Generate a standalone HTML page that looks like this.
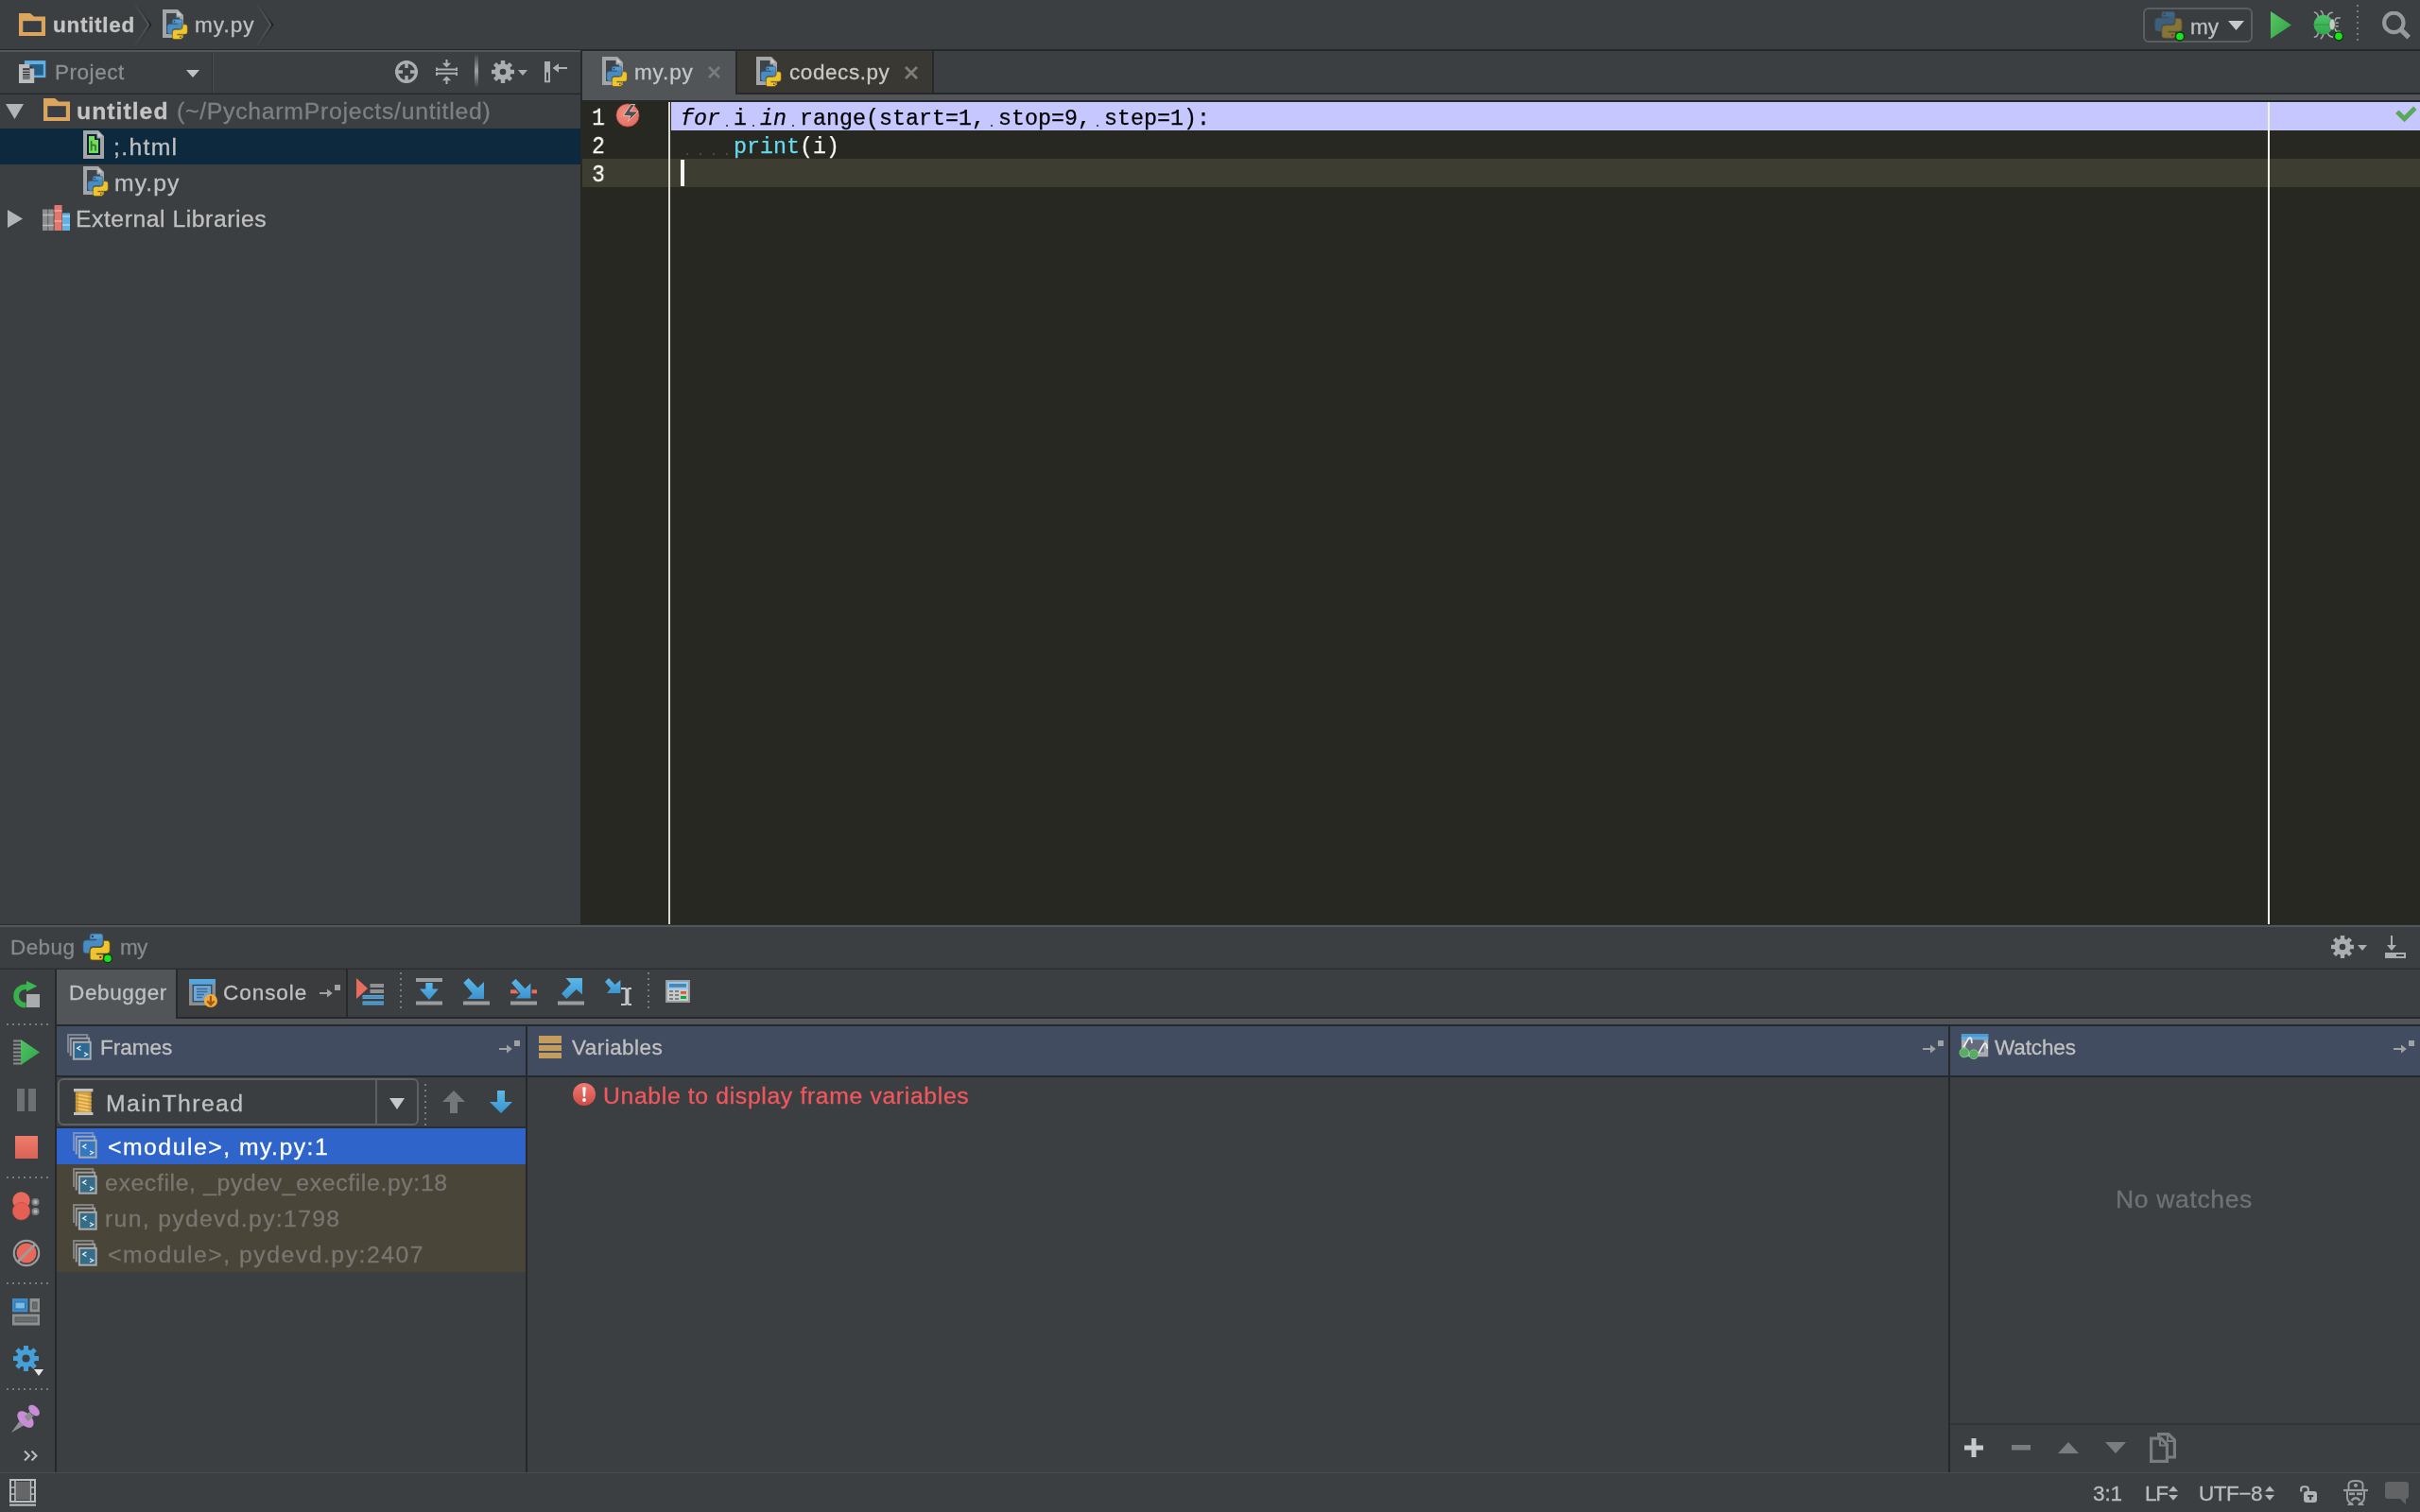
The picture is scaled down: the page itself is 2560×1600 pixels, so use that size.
<!DOCTYPE html>
<html><head><meta charset="utf-8"><title>untitled - my.py - PyCharm</title>
<style>
html,body{margin:0;padding:0;background:#3C3F41;}
#app{position:relative;width:2560px;height:1600px;overflow:hidden;background:#3C3F41;font-family:"Liberation Sans",sans-serif;}
#app>div,#app>span{position:absolute;}
#app svg{display:block;}
.t{white-space:pre;line-height:1;will-change:transform;-webkit-text-stroke:0.3px;}
.c{will-change:transform;-webkit-text-stroke:0.25px;white-space:pre;font-family:"Liberation Mono",monospace;font-size:23.333px;line-height:30px;height:30px;}
</style></head><body><div id="app">
<div style="left:0px;top:52px;width:2560px;height:1px;background:#26282B;"></div>
<div style="left:0px;top:53px;width:614px;height:2px;background:#525658;"></div>
<div style="left:614px;top:53px;width:1946px;height:1px;background:#26282B;"></div>
<div style="left:0px;top:98px;width:614px;height:1px;background:#34373A;"></div>
<div style="left:0px;top:99px;width:614px;height:1px;background:#232629;"></div>
<div style="left:224px;top:55px;width:1px;height:43px;background:#2F3234;"></div>
<div style="left:225px;top:55px;width:1px;height:43px;background:#4A4D4F;"></div>
<div style="left:614px;top:53px;width:2px;height:55px;background:#26282B;"></div>
<div style="left:0px;top:136px;width:614px;height:38px;background:#0D293E;"></div>
<div style="left:616px;top:54px;width:1944px;height:44px;background:#3C3F41;"></div>
<div style="left:616px;top:54px;width:162px;height:52px;background:#515557;"></div>
<div style="left:778px;top:54px;width:2px;height:44px;background:#26282B;"></div>
<div style="left:780px;top:54px;width:206px;height:44px;background:#393833;"></div>
<div style="left:986px;top:54px;width:2px;height:44px;background:#26282B;"></div>
<div style="left:778px;top:98px;width:1782px;height:2px;background:#26282B;"></div>
<div style="left:616px;top:100px;width:1944px;height:6px;background:#515557;"></div>
<div style="left:616px;top:106px;width:1944px;height:2px;background:#26282B;"></div>
<div style="left:614px;top:108px;width:1946px;height:870px;background:#272822;"></div>
<div style="left:616px;top:168px;width:1944px;height:30px;background:#3E3D32;"></div>
<div style="left:710px;top:108px;width:1850px;height:30px;background:#C7C7FF;"></div>
<div style="left:707px;top:108px;width:2px;height:870px;background:#D8D8D0;"></div>
<div style="left:2399px;top:108px;width:2px;height:870px;background:#F2F2EC;"></div>
<div style="left:720px;top:169px;width:4px;height:28px;background:#F8F8F0;"></div>
<div style="left:0px;top:978px;width:2560px;height:1px;background:#2A2C2E;"></div>
<div style="left:0px;top:979px;width:2560px;height:2px;background:#54575A;"></div>
<div style="left:0px;top:1024px;width:2560px;height:1px;background:#35383A;"></div>
<div style="left:0px;top:1025px;width:2560px;height:1px;background:#2A2C2E;"></div>
<div style="left:58px;top:1026px;width:2px;height:532px;background:#26282B;"></div>
<div style="left:60px;top:1026px;width:126px;height:58px;background:#515557;"></div>
<div style="left:186px;top:1026px;width:2px;height:50px;background:#26282B;"></div>
<div style="left:188px;top:1026px;width:178px;height:50px;background:#3A3C3E;"></div>
<div style="left:366px;top:1026px;width:2px;height:50px;background:#26282B;"></div>
<div style="left:186px;top:1076px;width:2374px;height:2px;background:#26282B;"></div>
<div style="left:60px;top:1078px;width:2500px;height:6px;background:#515557;"></div>
<div style="left:60px;top:1084px;width:2500px;height:2px;background:#26282B;"></div>
<div style="left:60px;top:1086px;width:2500px;height:52px;background:#424C60;"></div>
<div style="left:60px;top:1138px;width:2500px;height:2px;background:#26282B;"></div>
<div style="left:556px;top:1086px;width:2px;height:472px;background:#26282B;"></div>
<div style="left:2061px;top:1086px;width:2px;height:472px;background:#26282B;"></div>
<div style="left:60px;top:1192px;width:496px;height:2px;background:#2C2E30;"></div>
<div style="left:60px;top:1194px;width:496px;height:38px;background:#2F65CA;"></div>
<div style="left:60px;top:1232px;width:496px;height:114px;background:#494538;"></div>
<div style="left:61px;top:1141px;width:382px;height:50px;box-sizing:border-box;border:2px solid #5E6163;border-radius:6px;background:#3B3E40"></div>
<div style="left:397px;top:1143px;width:2px;height:46px;background:#5E6163;"></div>
<div style="left:2063px;top:1506px;width:497px;height:2px;background:#313436;"></div>
<div style="left:0px;top:1558px;width:2560px;height:1px;background:#4A4D4F;"></div>
<div style="left:2493px;top:5px;width:2px;height:40px;background:repeating-linear-gradient(to bottom,#787A7C 0 2px,transparent 2px 6px)"></div>
<div style="left:423px;top:1029px;width:2px;height:38px;background:repeating-linear-gradient(to bottom,#787A7C 0 2px,transparent 2px 6px)"></div>
<div style="left:685px;top:1029px;width:2px;height:38px;background:repeating-linear-gradient(to bottom,#787A7C 0 2px,transparent 2px 6px)"></div>
<div style="left:449px;top:1147px;width:2px;height:44px;background:repeating-linear-gradient(to bottom,#787A7C 0 2px,transparent 2px 6px)"></div>
<div style="left:7px;top:1083px;width:44px;height:2px;background:repeating-linear-gradient(to right,#787A7C 0 2px,transparent 2px 6px)"></div>
<div style="left:7px;top:1245px;width:44px;height:2px;background:repeating-linear-gradient(to right,#787A7C 0 2px,transparent 2px 6px)"></div>
<div style="left:7px;top:1357px;width:44px;height:2px;background:repeating-linear-gradient(to right,#787A7C 0 2px,transparent 2px 6px)"></div>
<div style="left:7px;top:1469px;width:44px;height:2px;background:repeating-linear-gradient(to right,#787A7C 0 2px,transparent 2px 6px)"></div>
<div style="left:20px;top:14px"><svg width="28" height="24" viewBox="0 0 28 24"><path d="M0 0H12L16 3.500H28V24H0Z" fill="#DCA55E"/><rect x="4.300" y="8.200" width="19.500" height="11.800" fill="#393E44"/></svg></div>
<div style="left:142.3px;top:2px"><svg width="20" height="50" viewBox="0 0 20 50"><defs><linearGradient id="chd" x1="0" y1="0" x2="0" y2="1"><stop offset="0" stop-color="#1B1D1E" stop-opacity="0"/><stop offset=".35" stop-color="#1B1D1E" stop-opacity=".25"/><stop offset=".5" stop-color="#1B1D1E" stop-opacity="1"/><stop offset=".65" stop-color="#1B1D1E" stop-opacity=".25"/><stop offset="1" stop-color="#1B1D1E" stop-opacity="0"/></linearGradient><linearGradient id="chl" x1="0" y1="0" x2="0" y2="1"><stop offset="0" stop-color="#565A5C" stop-opacity=".15"/><stop offset=".5" stop-color="#565A5C" stop-opacity="1"/><stop offset="1" stop-color="#565A5C" stop-opacity=".15"/></linearGradient></defs><path d="M2.300 2L17.100 24.200L2.800 46" fill="none" stroke="url(#chd)" stroke-width="2.400"/><path d="M.5 2L15.300 24.200L1 46" fill="none" stroke="url(#chl)" stroke-width="1.700"/></svg></div>
<div style="left:270.8px;top:2px"><svg width="20" height="50" viewBox="0 0 20 50"><defs><linearGradient id="chd" x1="0" y1="0" x2="0" y2="1"><stop offset="0" stop-color="#1B1D1E" stop-opacity="0"/><stop offset=".35" stop-color="#1B1D1E" stop-opacity=".25"/><stop offset=".5" stop-color="#1B1D1E" stop-opacity="1"/><stop offset=".65" stop-color="#1B1D1E" stop-opacity=".25"/><stop offset="1" stop-color="#1B1D1E" stop-opacity="0"/></linearGradient><linearGradient id="chl" x1="0" y1="0" x2="0" y2="1"><stop offset="0" stop-color="#565A5C" stop-opacity=".15"/><stop offset=".5" stop-color="#565A5C" stop-opacity="1"/><stop offset="1" stop-color="#565A5C" stop-opacity=".15"/></linearGradient></defs><path d="M2.300 2L17.100 24.200L2.800 46" fill="none" stroke="url(#chd)" stroke-width="2.400"/><path d="M.5 2L15.300 24.200L1 46" fill="none" stroke="url(#chl)" stroke-width="1.700"/></svg></div>
<div style="left:172px;top:10px"><svg width="28" height="33" viewBox="0 0 28 33"><path d="M0 0H16L22 6V30H0Z" fill="#A3A5A6"/><path d="M4 4H14.500V8.500H18V26H4Z" fill="#3F4448"/><path d="M15.500 1.500L20.500 6.500H15.500Z" fill="#C9CACB"/><g transform="translate(4.900 10.300) scale(.760)"><g opacity="1"><path d="M7 2.600Q7 0 9.600 0H18.400Q21 0 21 2.600V10Q21 13.400 17.500 13.500H10.200Q6.800 13.600 6.800 17V20.700H3Q0 20.700 0 17.500V10.200Q0 6.900 3.200 6.900H14V6.100H7Z" fill="#4A8CC2" stroke="#2E628F" stroke-width=".7"/><path d="M8 2.800Q8 1 9.800 1H18.200Q20 1 20 2.800V5H8Z" fill="#6FAAD6" opacity=".45"/><circle cx="9.900" cy="3" r="1.150" fill="#173F63"/><g transform="rotate(180 14.100 14)"><path d="M7 2.600Q7 0 9.600 0H18.400Q21 0 21 2.600V10Q21 13.400 17.500 13.500H10.200Q6.800 13.600 6.800 17V20.700H3Q0 20.700 0 17.500V10.200Q0 6.900 3.200 6.900H14V6.100H7Z" fill="#EEC42F" stroke="#5F4F0C" stroke-width=".8"/><circle cx="9.900" cy="3" r="1.150" fill="#5A3C06"/></g></g></g></svg></div>
<div style="left:20px;top:64px"><svg width="29" height="25" viewBox="0 0 29 25"><rect x="5.900" y=".1" width="22.400" height="18" fill="#62AFE3"/><rect x="8.400" y="4.100" width="17.400" height="11.600" fill="#235E86"/><path d="M0 4.100H11.200L16.200 8.700V24H0Z" fill="#B9BBBC"/><path d="M11.400 4.300V8.500H16Z" fill="#34373A"/><rect x="4.100" y="8.200" width="7.400" height="11.800" fill="#3A3D3F"/><path d="M4.100 10.900H11.500M4.100 13.500H11.500M4.100 16.200H11.500M4.100 18.800H11.500" stroke="#B9BBBC" stroke-width="1.100"/></svg></div>
<div style="left:197px;top:74px"><svg width="14" height="8" viewBox="0 0 14 8"><path d="M0 0H14L7.0 8Z" fill="#C0C2C3"/></svg></div>
<div style="left:418px;top:64px"><svg width="24" height="24" viewBox="0 0 24 24"><circle cx="12" cy="12" r="10.400" fill="none" stroke="#ABADAF" stroke-width="3.200"/><path d="M12 0V8M12 16V24M0 12H8M16 12H24" stroke="#ABADAF" stroke-width="3.400"/></svg></div>
<div style="left:461px;top:63px"><svg width="23" height="26" viewBox="0 0 23 26"><path d="M0 10.500H23M0 14.700H23" stroke="#ABADAF" stroke-width="1.900"/><path d="M1 8.500V12M22 8.500V12M1 13.500V17M22 13.500V17" stroke="#ABADAF" stroke-width="2"/><path d="M11.500 0V4.500" stroke="#ABADAF" stroke-width="2"/><path d="M6.800 3.800H16.200L11.500 8.600Z" fill="#ABADAF"/><path d="M11.500 26V21.500" stroke="#ABADAF" stroke-width="2"/><path d="M6.800 22.200H16.200L11.500 17.400Z" fill="#ABADAF"/></svg></div>
<div style="left:502px;top:57px;width:4px;height:36px;background:linear-gradient(to bottom,rgba(150,153,155,0),rgba(160,163,165,1) 50%,rgba(150,153,155,0));border-radius:2px"></div>
<div style="left:520px;top:64px"><svg width="24" height="24" viewBox="0 0 24 24"><rect x="9.80" y="0" width="4.400" height="24" fill="#ABADAF" transform="rotate(0.0 12 12)"/><rect x="9.80" y="0" width="4.400" height="24" fill="#ABADAF" transform="rotate(45.0 12 12)"/><rect x="9.80" y="0" width="4.400" height="24" fill="#ABADAF" transform="rotate(90.0 12 12)"/><rect x="9.80" y="0" width="4.400" height="24" fill="#ABADAF" transform="rotate(135.0 12 12)"/><circle cx="12" cy="12" r="8.64" fill="#ABADAF"/><circle cx="12" cy="12" r="3.300" fill="#3C3F41"/></svg></div>
<div style="left:548px;top:74px"><svg width="10" height="6" viewBox="0 0 10 6"><path d="M0 0H10L5.0 6Z" fill="#ABADAF"/></svg></div>
<div style="left:576px;top:65px"><svg width="25" height="23" viewBox="0 0 25 23"><rect x="0" y="0" width="6" height="22.300" fill="#ABADAF"/><rect x="2" y="11.500" width="2" height="8.800" fill="#3C3F41"/><path d="M13 7H24" stroke="#ABADAF" stroke-width="2"/><path d="M8.500 7L15 2.200V11.800Z" fill="#ABADAF"/></svg></div>
<div style="left:6px;top:110px"><svg width="19" height="16" viewBox="0 0 19 16"><path d="M0 0H19L9.500 16Z" fill="#B2B4B5"/></svg></div>
<div style="left:46px;top:104px"><svg width="28" height="24" viewBox="0 0 28 24"><path d="M0 0H12L16 3.500H28V24H0Z" fill="#DCA55E"/><rect x="4.300" y="8.200" width="19.500" height="11.800" fill="#393E44"/></svg></div>
<div style="left:88px;top:138px"><svg width="22" height="30" viewBox="0 0 22 30"><path d="M0 0H16L22 6V30H0Z" fill="#A3A5A6"/><path d="M4 4H14.500V8.500H18V26H4Z" fill="#0B2135"/><path d="M15.500 1.500L20.500 6.500H15.500Z" fill="#C9CACB"/><path d="M6 6H12V10H16V24H6Z" fill="#70DD5E"/><path d="M8.600 11V21.500M8.600 16.500Q11 14.500 13 16.200V21.500" fill="none" stroke="#3B7A2E" stroke-width="1.800"/></svg></div>
<div style="left:88px;top:176px"><svg width="28" height="33" viewBox="0 0 28 33"><path d="M0 0H16L22 6V30H0Z" fill="#A3A5A6"/><path d="M4 4H14.500V8.500H18V26H4Z" fill="#3F4448"/><path d="M15.500 1.500L20.500 6.500H15.500Z" fill="#C9CACB"/><g transform="translate(4.900 10.300) scale(.760)"><g opacity="1"><path d="M7 2.600Q7 0 9.600 0H18.400Q21 0 21 2.600V10Q21 13.400 17.500 13.500H10.200Q6.800 13.600 6.800 17V20.700H3Q0 20.700 0 17.500V10.200Q0 6.900 3.200 6.900H14V6.100H7Z" fill="#4A8CC2" stroke="#2E628F" stroke-width=".7"/><path d="M8 2.800Q8 1 9.800 1H18.200Q20 1 20 2.800V5H8Z" fill="#6FAAD6" opacity=".45"/><circle cx="9.900" cy="3" r="1.150" fill="#173F63"/><g transform="rotate(180 14.100 14)"><path d="M7 2.600Q7 0 9.600 0H18.400Q21 0 21 2.600V10Q21 13.400 17.500 13.500H10.200Q6.800 13.600 6.800 17V20.700H3Q0 20.700 0 17.500V10.200Q0 6.900 3.200 6.900H14V6.100H7Z" fill="#EEC42F" stroke="#5F4F0C" stroke-width=".8"/><circle cx="9.900" cy="3" r="1.150" fill="#5A3C06"/></g></g></g></svg></div>
<div style="left:8px;top:222px"><svg width="16" height="19" viewBox="0 0 16 19"><path d="M0 0V19L16 9.500Z" fill="#B2B4B5"/></svg></div>
<div style="left:45px;top:217px"><svg width="29" height="27" viewBox="0 0 29 27"><rect x="0" y="4.500" width="5.500" height="22.500" fill="#8C8E8F"/><rect x="6.200" y="4.500" width="5.500" height="22.500" fill="#8C8E8F"/><rect x="12.500" y="0" width="8" height="27" fill="#E4776D"/><rect x="21" y="8.500" width="8" height="18.500" fill="#62B2E1"/><path d="M0 10.500H11.700M0 21.500H11.700" stroke="#B9BABB" stroke-width="1.600"/><path d="M12.500 6H20.500M12.500 17H20.500" stroke="#F3A79F" stroke-width="1.600"/><path d="M21 12H29M21 21H29" stroke="#A5D6F2" stroke-width="1.600"/></svg></div>
<div style="left:637px;top:60px"><svg width="28" height="33" viewBox="0 0 28 33"><path d="M0 0H16L22 6V30H0Z" fill="#A3A5A6"/><path d="M4 4H14.500V8.500H18V26H4Z" fill="#3F4448"/><path d="M15.500 1.500L20.500 6.500H15.500Z" fill="#C9CACB"/><g transform="translate(4.900 10.300) scale(.760)"><g opacity="1"><path d="M7 2.600Q7 0 9.600 0H18.400Q21 0 21 2.600V10Q21 13.400 17.500 13.500H10.200Q6.800 13.600 6.800 17V20.700H3Q0 20.700 0 17.500V10.200Q0 6.900 3.200 6.900H14V6.100H7Z" fill="#4A8CC2" stroke="#2E628F" stroke-width=".7"/><path d="M8 2.800Q8 1 9.800 1H18.200Q20 1 20 2.800V5H8Z" fill="#6FAAD6" opacity=".45"/><circle cx="9.900" cy="3" r="1.150" fill="#173F63"/><g transform="rotate(180 14.100 14)"><path d="M7 2.600Q7 0 9.600 0H18.400Q21 0 21 2.600V10Q21 13.400 17.500 13.500H10.200Q6.800 13.600 6.800 17V20.700H3Q0 20.700 0 17.500V10.200Q0 6.900 3.200 6.900H14V6.100H7Z" fill="#EEC42F" stroke="#5F4F0C" stroke-width=".8"/><circle cx="9.900" cy="3" r="1.150" fill="#5A3C06"/></g></g></g></svg></div>
<div style="left:800px;top:60px"><svg width="28" height="33" viewBox="0 0 28 33"><path d="M0 0H16L22 6V30H0Z" fill="#A3A5A6"/><path d="M4 4H14.500V8.500H18V26H4Z" fill="#3F4448"/><path d="M15.500 1.500L20.500 6.500H15.500Z" fill="#C9CACB"/><g transform="translate(4.900 10.300) scale(.760)"><g opacity="1"><path d="M7 2.600Q7 0 9.600 0H18.400Q21 0 21 2.600V10Q21 13.400 17.500 13.500H10.200Q6.800 13.600 6.800 17V20.700H3Q0 20.700 0 17.500V10.200Q0 6.900 3.200 6.900H14V6.100H7Z" fill="#4A8CC2" stroke="#2E628F" stroke-width=".7"/><path d="M8 2.800Q8 1 9.800 1H18.200Q20 1 20 2.800V5H8Z" fill="#6FAAD6" opacity=".45"/><circle cx="9.900" cy="3" r="1.150" fill="#173F63"/><g transform="rotate(180 14.100 14)"><path d="M7 2.600Q7 0 9.600 0H18.400Q21 0 21 2.600V10Q21 13.400 17.500 13.500H10.200Q6.800 13.600 6.800 17V20.700H3Q0 20.700 0 17.500V10.200Q0 6.900 3.200 6.900H14V6.100H7Z" fill="#EEC42F" stroke="#5F4F0C" stroke-width=".8"/><circle cx="9.900" cy="3" r="1.150" fill="#5A3C06"/></g></g></g></svg></div>
<div style="left:749px;top:70px"><svg width="13" height="13" viewBox="0 0 13 13"><path d="M1 1L12 12M12 1L1 12" stroke="#787C7F" stroke-width="2.500"/></svg></div>
<div style="left:957px;top:70px"><svg width="14" height="14" viewBox="0 0 14 14"><path d="M1 1L13 13M13 1L1 13" stroke="#7F7F7A" stroke-width="2.800"/></svg></div>
<div style="left:651px;top:109px"><svg width="26" height="26" viewBox="0 0 26 26"><defs><radialGradient id="bpg" cx=".35" cy=".4" r=".75"><stop offset="0" stop-color="#F08C7C"/><stop offset="1" stop-color="#E06A60"/></radialGradient></defs><circle cx="13" cy="13" r="12.200" fill="url(#bpg)" stroke="#7A2E28" stroke-width=".6"/><path d="M16.300 1.500L20.700 1.500L15.400 8.800L24.100 9L13.400 19.200L15.800 13.800L8.400 13.400Z" fill="#4D5052" stroke="#F7CFC6" stroke-width=".8"/></svg></div>
<div style="left:2534px;top:112px"><svg width="23" height="18" viewBox="0 0 23 18"><path d="M1.800 6.300L9.500 13.800L20.800 2.300" fill="none" stroke="#5BA855" stroke-width="5"/></svg></div>
<div style="left:2267px;top:8px;width:116px;height:37px;box-sizing:border-box;border:2px solid #5B5E60;border-radius:6px;background:#3A3D3F"></div>
<div style="left:2279px;top:12px"><svg width="32" height="32" viewBox="0 0 32 32"><g transform="translate(.7 .2) scale(1.005 1)"><g opacity="0.82"><path d="M7 2.600Q7 0 9.600 0H18.400Q21 0 21 2.600V10Q21 13.400 17.500 13.500H10.200Q6.800 13.600 6.800 17V20.700H3Q0 20.700 0 17.500V10.200Q0 6.900 3.200 6.900H14V6.100H7Z" fill="#3F6789" stroke="#3A5A78" stroke-width=".7"/><path d="M8 2.800Q8 1 9.800 1H18.200Q20 1 20 2.800V5H8Z" fill="#4F7DA3" opacity=".45"/><circle cx="9.900" cy="3" r="1.150" fill="#2C4A66"/><g transform="rotate(180 14.100 14)"><path d="M7 2.600Q7 0 9.600 0H18.400Q21 0 21 2.600V10Q21 13.400 17.500 13.500H10.200Q6.800 13.600 6.800 17V20.700H3Q0 20.700 0 17.500V10.200Q0 6.900 3.200 6.900H14V6.100H7Z" fill="#96813A" stroke="#6A5A2A" stroke-width=".8"/><circle cx="9.900" cy="3" r="1.150" fill="#5A4C22"/></g></g></g><circle cx="27" cy="26.500" r="4.500" fill="#1BE31F" stroke="#0C3A0E" stroke-width="1.300"/></svg></div>
<div style="left:2357px;top:22px"><svg width="17" height="10" viewBox="0 0 17 10"><path d="M0 0H17L8.5 10Z" fill="#C8C9CA"/></svg></div>
<div style="left:2401.7px;top:11.6px"><svg width="22" height="29" viewBox="0 0 22 29"><defs><linearGradient id="rg" x1="0" y1="0" x2="1" y2="1"><stop offset="0" stop-color="#5CC766"/><stop offset="1" stop-color="#2E9E45"/></linearGradient></defs><path d="M0 0L22 14.500L0 29Z" fill="url(#rg)"/></svg></div>
<div style="left:2447px;top:10px"><svg width="33" height="34" viewBox="0 0 33 34"><g fill="none" stroke="#A6A8A9" stroke-width="1.600" stroke-linecap="round"><path d="M5.500 8.500Q5 3.600 1.500 3M10.800 6.500Q10.300 3.500 8.300 1.500M15.500 8Q15.500 3.800 20.300 3.200M5.500 23.800Q5 28.700 1.500 29.300M10.800 25.800Q10.300 28.800 8.300 30.800M15.500 24.300Q15.500 28.500 20.300 29.100M28.300 9H25.500Q23.500 9 23.300 11.800M28.300 23.300H25.500Q23.500 23.300 23.300 20.500M24 14.300H26.200M24 17.800H26.200"/></g><defs><linearGradient id="bgg" x1="0" y1="0" x2="0" y2="1"><stop offset="0" stop-color="#4FC36A"/><stop offset="1" stop-color="#2FA84C"/></linearGradient></defs><ellipse cx="10.800" cy="16.150" rx="10.200" ry="10.350" fill="url(#bgg)"/><path d="M.8 16.150H18" stroke="#2A9443" stroke-width="1"/><ellipse cx="20.100" cy="15.900" rx="3.100" ry="5.900" fill="#C4C6C7" stroke="#2A8A40" stroke-width=".6"/><circle cx="27" cy="28.300" r="4.500" fill="#1BE31F" stroke="#0C3A0E" stroke-width="1.300"/></svg></div>
<div style="left:2519px;top:12px"><svg width="31" height="30" viewBox="0 0 31 30"><circle cx="13.300" cy="11.900" r="10.200" fill="none" stroke="#97999B" stroke-width="4.200"/><path d="M20.500 19.200L29.200 27.600" stroke="#97999B" stroke-width="5.200"/></svg></div>
<div style="left:87px;top:987px"><svg width="32" height="33" viewBox="0 0 32 33"><g transform="translate(1 1)"><g opacity="1"><path d="M7 2.600Q7 0 9.600 0H18.400Q21 0 21 2.600V10Q21 13.400 17.500 13.500H10.200Q6.800 13.600 6.800 17V20.700H3Q0 20.700 0 17.500V10.200Q0 6.900 3.200 6.900H14V6.100H7Z" fill="#4A8CC2" stroke="#2E628F" stroke-width=".7"/><path d="M8 2.800Q8 1 9.800 1H18.200Q20 1 20 2.800V5H8Z" fill="#6FAAD6" opacity=".45"/><circle cx="9.900" cy="3" r="1.150" fill="#173F63"/><g transform="rotate(180 14.100 14)"><path d="M7 2.600Q7 0 9.600 0H18.400Q21 0 21 2.600V10Q21 13.400 17.500 13.500H10.200Q6.800 13.600 6.800 17V20.700H3Q0 20.700 0 17.500V10.200Q0 6.900 3.200 6.900H14V6.100H7Z" fill="#EEC42F" stroke="#5F4F0C" stroke-width=".8"/><circle cx="9.900" cy="3" r="1.150" fill="#5A3C06"/></g></g></g><circle cx="27" cy="27.300" r="4.400" fill="#1BE31F" stroke="#0E3A10" stroke-width="1.200"/></svg></div>
<div style="left:2466px;top:990px"><svg width="24" height="24" viewBox="0 0 24 24"><rect x="9.80" y="0" width="4.400" height="24" fill="#ABADAF" transform="rotate(0.0 12 12)"/><rect x="9.80" y="0" width="4.400" height="24" fill="#ABADAF" transform="rotate(45.0 12 12)"/><rect x="9.80" y="0" width="4.400" height="24" fill="#ABADAF" transform="rotate(90.0 12 12)"/><rect x="9.80" y="0" width="4.400" height="24" fill="#ABADAF" transform="rotate(135.0 12 12)"/><circle cx="12" cy="12" r="8.64" fill="#ABADAF"/><circle cx="12" cy="12" r="3.300" fill="#3C3F41"/></svg></div>
<div style="left:2494px;top:1000px"><svg width="10" height="6" viewBox="0 0 10 6"><path d="M0 0H10L5.0 6Z" fill="#ABADAF"/></svg></div>
<div style="left:2523px;top:990px"><svg width="22" height="24" viewBox="0 0 22 24"><rect x="0" y="18" width="22" height="6" fill="#ABADAF"/><rect x="12" y="20" width="8" height="2" fill="#3C3F41"/><path d="M7 0V11" stroke="#ABADAF" stroke-width="2"/><path d="M2 10H12L7 16Z" fill="#ABADAF"/></svg></div>
<div style="left:13px;top:1037px"><svg width="30" height="30" viewBox="0 0 30 30"><path d="M15 4.600A12.400 12.400 0 1 0 14.500 29.300V23.800A6.900 6.900 0 1 1 15 10.100Z" fill="#36B14C"/><path d="M15 1V12.300L26.300 6.600Z" fill="#3CB852"/><rect x="15" y="15" width="14" height="14" fill="#A9ABAC"/></svg></div>
<div style="left:14px;top:1100px"><svg width="28" height="27" viewBox="0 0 28 27"><path d="M0 1.500H8M0 5.500H8M0 9.500H8M0 13.500H8M0 17.500H8M0 21.500H8M0 25.500H8" stroke="#8A8C8D" stroke-width="2"/><defs><linearGradient id="rsg" x1="0" y1="0" x2="1" y2="1"><stop offset="0" stop-color="#52C465"/><stop offset="1" stop-color="#2FA247"/></linearGradient></defs><path d="M8 0L28 13.500L8 27Z" fill="url(#rsg)"/></svg></div>
<div style="left:18px;top:1152px"><svg width="20" height="24" viewBox="0 0 20 24"><rect x="0" y="0" width="8" height="24" fill="#6E7071"/><rect x="12" y="0" width="8" height="24" fill="#6E7071"/></svg></div>
<div style="left:16px;top:1202px"><svg width="24" height="24" viewBox="0 0 24 24"><defs><linearGradient id="sg" x1="0" y1="0" x2="0" y2="1"><stop offset="0" stop-color="#EE7D6B"/><stop offset="1" stop-color="#DA6257"/></linearGradient></defs><rect width="24" height="24" fill="url(#sg)"/></svg></div>
<div style="left:13px;top:1261px"><svg width="30" height="31" viewBox="0 0 30 31"><circle cx="9.500" cy="9.500" r="9.200" fill="#E96A5C"/><circle cx="9.500" cy="20.700" r="9.200" fill="#E55F54" stroke="#C44E45" stroke-width=".8"/><circle cx="24.500" cy="11" r="4" fill="#7E8081"/><circle cx="24.500" cy="11" r="2" fill="#B0B2B3"/><circle cx="24.500" cy="21" r="4" fill="#7E8081"/><circle cx="24.500" cy="21" r="2" fill="#B0B2B3"/></svg></div>
<div style="left:13px;top:1311px"><svg width="30" height="30" viewBox="0 0 30 30"><circle cx="15" cy="15" r="10.500" fill="#E8695C"/><circle cx="15" cy="15" r="13.200" fill="none" stroke="#9A9C9D" stroke-width="2.200"/><path d="M5.500 24.500L24.500 5.500" stroke="#9A9C9D" stroke-width="3"/></svg></div>
<div style="left:13px;top:1374px"><svg width="29" height="29" viewBox="0 0 29 29"><rect x="0" y="0" width="16.500" height="14.500" fill="#3A8CCB"/><rect x="3" y="4" width="10.500" height="7" fill="#7CBBE4" stroke="#2C6FA5" stroke-width="1"/><rect x="18.500" y="0" width="10.500" height="14.500" fill="#8E9091"/><rect x="21.500" y="4" width="4.500" height="7" fill="#6A6C6D" stroke="#5A5C5D" stroke-width="1"/><rect x="0" y="16.500" width="29" height="12" fill="#8E9091"/><rect x="3" y="20" width="23" height="5" fill="#6A6C6D" stroke="#5A5C5D" stroke-width="1"/></svg></div>
<div style="left:14px;top:1424px"><svg width="27" height="27" viewBox="0 0 27 27"><g transform="scale(1.125)"><rect x="9.80" y="0" width="4.400" height="24" fill="#46A0D8" transform="rotate(0.0 12 12)"/><rect x="9.80" y="0" width="4.400" height="24" fill="#46A0D8" transform="rotate(45.0 12 12)"/><rect x="9.80" y="0" width="4.400" height="24" fill="#46A0D8" transform="rotate(90.0 12 12)"/><rect x="9.80" y="0" width="4.400" height="24" fill="#46A0D8" transform="rotate(135.0 12 12)"/><circle cx="12" cy="12" r="8.64" fill="#46A0D8"/><circle cx="12" cy="12" r="3.600" fill="#3C3F41"/></g></svg><div style="position:absolute;left:22px;top:25px"><svg width="10" height="7" viewBox="0 0 10 7"><path d="M0 0H10L5.0 7Z" fill="#E8E8E8"/></svg></div></div>
<div style="left:12px;top:1485px"><svg width="32" height="32" viewBox="0 0 32 32"><path d="M0 31L8.500 19L13 23.500Z" fill="#8F9192"/><ellipse cx="15" cy="17" rx="10.500" ry="6.300" fill="#C98DD8" transform="rotate(45 15 17)"/><path d="M13.500 14.500L19 9L23.500 13.500L18 19Z" fill="#8A8C8D"/><ellipse cx="24" cy="7.500" rx="7" ry="4.300" fill="#C98DD8" transform="rotate(45 24 7.500)"/></svg></div>
<div style="left:25px;top:1535px"><svg width="15" height="11" viewBox="0 0 15 11"><path d="M1 .5L6 5.500L1 10.500M8.500 .5L13.500 5.500L8.500 10.500" fill="none" stroke="#BDBFC0" stroke-width="2"/></svg></div>
<div style="left:10px;top:1565px"><svg width="28" height="29" viewBox="0 0 28 29"><rect x="1" y="1" width="26" height="23" fill="none" stroke="#B9BBBC" stroke-width="2"/><rect x="7" y="3" width="14.500" height="19" fill="#646667"/><path d="M6 1V24M22.500 1V24M1 9H6M1 16H6M22.500 9H27M22.500 16H27" stroke="#B9BBBC" stroke-width="1.600"/><rect x="0" y="26.500" width="28" height="2.200" fill="#B9BBBC"/></svg></div>
<div style="left:200px;top:1036px"><svg width="31" height="31" viewBox="0 0 31 31"><rect x="0" y="0" width="28" height="28" fill="#8C8E8F"/><rect x="0" y="0" width="28" height="5.500" fill="#55A6DE"/><rect x="4.200" y="6.500" width="19.600" height="17.300" fill="#6FA6D6" stroke="#21405E" stroke-width="1.200"/><path d="M8 10.500H19.500M8 13.500H19.500M8 16.500H16M8 19.500H14" stroke="#3A6C9A" stroke-width="1.300"/><circle cx="22.900" cy="23" r="7.100" fill="#F4AB35"/><path d="M22.900 18V27M19.200 23.200L22.900 27.300L26.600 23.200" fill="none" stroke="#9A5A14" stroke-width="2.200"/></svg></div>
<div style="left:338px;top:1042px"><svg width="23" height="15" viewBox="0 0 23 15"><path d="M0 9H9" stroke="#9FA1A2" stroke-width="2"/><path d="M8 4.500L13.800 9L8 13.500Z" fill="#9FA1A2"/><rect x="16" y="0" width="6" height="6" fill="#9FA1A2"/></svg></div>
<div style="left:377px;top:1035px"><svg width="29" height="29" viewBox="0 0 29 29"><path d="M0 0L12 11L0 22Z" fill="#E96C5E"/><rect x="14.500" y="6" width="14.500" height="4" fill="#8F9192"/><rect x="14.500" y="12" width="14.500" height="4" fill="#8F9192"/><rect x="6.500" y="18" width="22.500" height="4" fill="#5AA5D8"/><rect x="6.500" y="24.500" width="22.500" height="4" fill="#5AA5D8"/><path d="M6.500 20H29M6.500 26.500H29" stroke="#3F7FAE" stroke-width="1"/></svg></div>
<div style="left:440px;top:1035px"><svg width="28" height="29" viewBox="0 0 28 29"><defs><linearGradient id="bl" x1="0" y1="0" x2="0" y2="1"><stop offset="0" stop-color="#5DB8E8"/><stop offset="1" stop-color="#3A93CF"/></linearGradient></defs><rect x="0" y="0" width="28" height="4" fill="#9A9C9D"/><rect x="0" y="24.500" width="28" height="4" fill="#9A9C9D"/><path d="M10.300 5H17.600V11.500H23.800L14 23L4 11.500H10.300Z" fill="url(#bl)"/></svg></div>
<div style="left:490px;top:1035px"><svg width="28" height="29" viewBox="0 0 28 29"><defs><linearGradient id="bl" x1="0" y1="0" x2="0" y2="1"><stop offset="0" stop-color="#5DB8E8"/><stop offset="1" stop-color="#3A93CF"/></linearGradient></defs><path d="M0.200 5L5.600 0L15.500 10.300L22 4V22H4L9.800 16.400Z" fill="url(#bl)"/><rect x="0" y="24.500" width="28" height="4" fill="#9A9C9D"/></svg></div>
<div style="left:540px;top:1035px"><svg width="28" height="29" viewBox="0 0 28 29"><defs><linearGradient id="bl" x1="0" y1="0" x2="0" y2="1"><stop offset="0" stop-color="#5DB8E8"/><stop offset="1" stop-color="#3A93CF"/></linearGradient></defs><rect x="0" y="12.300" width="28" height="4" fill="#E96C5E"/><path stroke="#3C3F41" stroke-width="1.200" d="M0.200 5L5.600 0L15.500 10.300L22 4V22H4L9.800 16.400Z" fill="url(#bl)"/><rect x="0" y="24.500" width="28" height="4" fill="#9A9C9D"/></svg></div>
<div style="left:590px;top:1035px"><svg width="28" height="29" viewBox="0 0 28 29"><defs><linearGradient id="bl" x1="0" y1="0" x2="0" y2="1"><stop offset="0" stop-color="#5DB8E8"/><stop offset="1" stop-color="#3A93CF"/></linearGradient></defs><path d="M8.500 0H26V17.500L19.700 12L9.300 22L4 16.500L13.900 6.100Z" fill="url(#bl)"/><rect x="0" y="24.500" width="28" height="4" fill="#9A9C9D"/></svg></div>
<div style="left:640px;top:1035px"><svg width="29" height="29" viewBox="0 0 29 29"><defs><linearGradient id="bl" x1="0" y1="0" x2="0" y2="1"><stop offset="0" stop-color="#5DB8E8"/><stop offset="1" stop-color="#3A93CF"/></linearGradient></defs><path d="M0 4L4 0L10.600 7L16.400 2V16H2L6 11Z" fill="url(#bl)"/><path d="M17 11H21.500Q22.600 11 22.600 12.500V26.500Q22.600 28 21.500 28H17M28 11H25.200Q24.200 11 24.200 12.500V26.500Q24.200 28 25.200 28H28" fill="none" stroke="#C4C6C7" stroke-width="2"/><rect x="21.600" y="12" width="3.600" height="15" fill="#C4C6C7"/></svg></div>
<div style="left:704px;top:1037px"><svg width="26" height="24" viewBox="0 0 26 24"><rect x="0" y="0" width="26" height="24" fill="#9A9C9D"/><rect x="2" y="2" width="22" height="20" fill="#C8CACB"/><rect x="2" y="2" width="22" height="7.800" fill="#8DCBF2"/><rect x="4" y="4" width="18" height="3.800" fill="#4A86B4"/><g fill="#7D7F80"><rect x="4" y="11" width="4" height="2"/><rect x="10" y="11" width="4" height="2"/><rect x="4" y="15" width="4" height="2"/><rect x="10" y="15" width="4" height="2"/><rect x="4" y="19" width="4" height="2"/><rect x="10" y="19" width="4" height="2"/></g><rect x="16" y="12" width="6" height="2.800" fill="#E2573F"/><rect x="16" y="17" width="6" height="3" fill="#05B02C"/></svg></div>
<div style="left:71px;top:1094px"><svg width="27" height="28" viewBox="0 0 27 28"><path d="M21.300 1H1V20M21.300 0V4.800" fill="none" stroke="rgba(175,180,186,0.55)" stroke-width="2"/><path d="M24.200 4.800H3.700V23.500M23.200 4V8.800" fill="none" stroke="rgba(180,185,190,0.75)" stroke-width="2"/><rect x="6.900" y="8.800" width="17.800" height="17.900" fill="#2C6A94" stroke="#A9ADB0" stroke-width="2"/><path d="M14.400 12.900L10.700 15.200L14.400 17.500M18 19.700L21.600 21.800L18 23.800" fill="none" stroke="#E6EDF2" stroke-width="1.300"/></svg></div>
<div style="left:528px;top:1101px"><svg width="23" height="15" viewBox="0 0 23 15"><path d="M0 9H9" stroke="#9FA1A2" stroke-width="2"/><path d="M8 4.500L13.800 9L8 13.500Z" fill="#9FA1A2"/><rect x="16" y="0" width="6" height="6" fill="#9FA1A2"/></svg></div>
<div style="left:570px;top:1096px"><svg width="24" height="24" viewBox="0 0 24 24"><rect y="0" width="24" height="8" fill="#C49C5E"/><rect y="10" width="24" height="6" fill="#C49C5E"/><rect y="18" width="24" height="6" fill="#C49C5E"/></svg></div>
<div style="left:2034px;top:1101px"><svg width="23" height="15" viewBox="0 0 23 15"><path d="M0 9H9" stroke="#9FA1A2" stroke-width="2"/><path d="M8 4.500L13.800 9L8 13.500Z" fill="#9FA1A2"/><rect x="16" y="0" width="6" height="6" fill="#9FA1A2"/></svg></div>
<div style="left:2072px;top:1093px"><svg width="32" height="29" viewBox="0 0 32 29"><rect x="2.900" y="1" width="28.300" height="24.200" fill="#A9ABB0"/><rect x="2.900" y="1" width="28.300" height="6.300" fill="#4C9AD4"/><rect x="2.900" y="4" width="28.300" height="3.300" fill="#64ABDB"/><rect x="7.500" y="7.300" width="19.200" height="13" fill="#666B7C"/><path d="M5.400 14.500L10.400 6.100Q12.300 3.600 13.500 7L13.900 10.300M21.400 20.900L26.400 12.200Q28.400 9.700 29.600 13L30.100 16.200" fill="none" stroke="#ECECF0" stroke-width="1.800" stroke-linecap="round"/><circle cx="5.900" cy="20.900" r="4.900" fill="#55AC62" stroke="#84D68E" stroke-width=".9" opacity=".95"/><circle cx="15.900" cy="22.700" r="4.900" fill="#55AC62" stroke="#84D68E" stroke-width=".9" opacity=".95"/></svg></div>
<div style="left:2532px;top:1101px"><svg width="23" height="15" viewBox="0 0 23 15"><path d="M0 9H9" stroke="#9FA1A2" stroke-width="2"/><path d="M8 4.500L13.800 9L8 13.500Z" fill="#9FA1A2"/><rect x="16" y="0" width="6" height="6" fill="#9FA1A2"/></svg></div>
<div style="left:78px;top:1152px"><svg width="21" height="28" viewBox="0 0 21 28"><rect x="0" y="0" width="20.400" height="3.300" fill="#BFC1C2"/><rect x="0" y="25" width="20.400" height="3" fill="#BFC1C2"/><rect x="1.900" y="3.300" width="16.600" height="21.700" fill="#D9A240"/><path d="M1.900 6L18.500 9M1.900 9.700L18.500 12.700M1.900 13.400L18.500 16.400M1.900 17.100L18.500 20.100M1.900 20.800L18.500 23.800" stroke="#F2CD74" stroke-width="1.500"/><rect x="1.900" y="3.300" width="3" height="21.700" fill="#B58024" opacity=".55"/><rect x="15.500" y="3.300" width="3" height="21.700" fill="#B58024" opacity=".35"/></svg></div>
<div style="left:412px;top:1162px"><svg width="16" height="12" viewBox="0 0 16 12"><path d="M0 0H16L8.0 12Z" fill="#C8C9CA"/></svg></div>
<div style="left:468px;top:1154px"><svg width="24" height="24" viewBox="0 0 24 24"><path d="M12 0L24 12H16V24H8V12H0Z" fill="#747677"/></svg></div>
<div style="left:517.8px;top:1154px"><svg width="24" height="24" viewBox="0 0 24 24"><defs><linearGradient id="bl" x1="0" y1="0" x2="0" y2="1"><stop offset="0" stop-color="#5DB8E8"/><stop offset="1" stop-color="#3A93CF"/></linearGradient></defs><path d="M12 24L24 12H16V0H8V12H0Z" fill="url(#bl)"/></svg></div>
<div style="left:77px;top:1198px"><svg width="27" height="28" viewBox="0 0 27 28"><path d="M21.300 1H1V20M21.300 0V4.800" fill="none" stroke="rgba(175,180,186,0.55)" stroke-width="2"/><path d="M24.200 4.800H3.700V23.500M23.200 4V8.800" fill="none" stroke="rgba(180,185,190,0.75)" stroke-width="2"/><rect x="6.900" y="8.800" width="17.800" height="17.900" fill="#3378C0" stroke="#A9ADB0" stroke-width="2"/><path d="M14.400 12.900L10.700 15.200L14.400 17.500M18 19.700L21.600 21.800L18 23.800" fill="none" stroke="#E6EDF2" stroke-width="1.300"/></svg></div>
<div style="left:77px;top:1236px"><svg width="27" height="28" viewBox="0 0 27 28"><path d="M21.300 1H1V20M21.300 0V4.800" fill="none" stroke="rgba(175,180,186,0.55)" stroke-width="2"/><path d="M24.200 4.800H3.700V23.500M23.200 4V8.800" fill="none" stroke="rgba(180,185,190,0.75)" stroke-width="2"/><rect x="6.900" y="8.800" width="17.800" height="17.900" fill="#356D88" stroke="#A9ADB0" stroke-width="2"/><path d="M14.400 12.900L10.700 15.200L14.400 17.500M18 19.700L21.600 21.800L18 23.800" fill="none" stroke="#E6EDF2" stroke-width="1.300"/></svg></div>
<div style="left:77px;top:1274px"><svg width="27" height="28" viewBox="0 0 27 28"><path d="M21.300 1H1V20M21.300 0V4.800" fill="none" stroke="rgba(175,180,186,0.55)" stroke-width="2"/><path d="M24.200 4.800H3.700V23.500M23.200 4V8.800" fill="none" stroke="rgba(180,185,190,0.75)" stroke-width="2"/><rect x="6.900" y="8.800" width="17.800" height="17.900" fill="#356D88" stroke="#A9ADB0" stroke-width="2"/><path d="M14.400 12.900L10.700 15.200L14.400 17.500M18 19.700L21.600 21.800L18 23.800" fill="none" stroke="#E6EDF2" stroke-width="1.300"/></svg></div>
<div style="left:77px;top:1312px"><svg width="27" height="28" viewBox="0 0 27 28"><path d="M21.300 1H1V20M21.300 0V4.800" fill="none" stroke="rgba(175,180,186,0.55)" stroke-width="2"/><path d="M24.200 4.800H3.700V23.500M23.200 4V8.800" fill="none" stroke="rgba(180,185,190,0.75)" stroke-width="2"/><rect x="6.900" y="8.800" width="17.800" height="17.900" fill="#356D88" stroke="#A9ADB0" stroke-width="2"/><path d="M14.400 12.900L10.700 15.200L14.400 17.500M18 19.700L21.600 21.800L18 23.800" fill="none" stroke="#E6EDF2" stroke-width="1.300"/></svg></div>
<div style="left:606px;top:1146px"><svg width="24" height="24" viewBox="0 0 24 24"><defs><linearGradient id="eg" x1="0" y1="0" x2="0" y2="1"><stop offset="0" stop-color="#F07A72"/><stop offset="1" stop-color="#CF4B46"/></linearGradient></defs><circle cx="12" cy="12" r="12" fill="url(#eg)"/><path d="M10.300 4.500H13.700L13.100 14.500H10.900Z" fill="#FFF"/><circle cx="12" cy="18" r="1.900" fill="#FFF"/></svg></div>
<div style="left:2078px;top:1522px"><svg width="20" height="20" viewBox="0 0 20 20"><path d="M10 0V20M0 10H20" stroke="#C8CACB" stroke-width="5"/></svg></div>
<div style="left:2128px;top:1529px"><svg width="20" height="6" viewBox="0 0 20 6"><rect width="20" height="5.500" fill="#7A7C7E"/></svg></div>
<div style="left:2177px;top:1526px"><svg width="22" height="12" viewBox="0 0 22 12"><path d="M0 12H22L11.0 0Z" fill="#7A7C7E"/></svg></div>
<div style="left:2227px;top:1526px"><svg width="22" height="12" viewBox="0 0 22 12"><path d="M0 0H22L11.0 12Z" fill="#7A7C7E"/></svg></div>
<div style="left:2274px;top:1516px"><svg width="28" height="32" viewBox="0 0 28 32"><path d="M9.600 6V1.600H20L26.400 8V26H20" fill="none" stroke="#7A7C7E" stroke-width="3.200"/><path d="M19 2V9H26" fill="none" stroke="#7A7C7E" stroke-width="2.200"/><path d="M1.600 6.100H12L18.400 12.500V30.400H1.600Z" fill="none" stroke="#7A7C7E" stroke-width="3.200"/><path d="M11 6.500V13.500H18" fill="none" stroke="#7A7C7E" stroke-width="2.200"/></svg></div>
<div style="left:2294px;top:1572px"><svg width="10" height="16" viewBox="0 0 10 16"><path d="M0 6.200H10L5 .5Z" fill="#B4B6B7"/><path d="M0 10H10L5 15.800Z" fill="#B4B6B7"/></svg></div>
<div style="left:2395.5px;top:1572px"><svg width="10" height="16" viewBox="0 0 10 16"><path d="M0 6.200H10L5 .5Z" fill="#B4B6B7"/><path d="M0 10H10L5 15.800Z" fill="#B4B6B7"/></svg></div>
<div style="left:2432px;top:1571px"><svg width="19" height="19" viewBox="0 0 19 19"><path d="M2.200 7.500V4.800Q2.200 2.200 4.800 2.200H7.200Q9.800 2.200 9.800 4.800V7.500" fill="none" stroke="#B0B2B3" stroke-width="2.100"/><rect x="5" y="7" width="14" height="12" rx="3" fill="#B0B2B3"/><path d="M9.200 11H15.200V13H13.300V16.300H11.100V13H9.200Z" fill="#3C3F41"/></svg></div>
<div style="left:2479px;top:1566px"><svg width="26" height="28" viewBox="0 0 26 28"><path d="M5.500 10V5Q5.500 1 13 1Q20.500 1 20.500 5V10" fill="none" stroke="#9A9C9D" stroke-width="2"/><circle cx="13" cy="5.800" r="2.100" fill="#9A9C9D"/><path d="M0 11H26" stroke="#9A9C9D" stroke-width="2.200"/><path d="M4 12V18Q4 23 8 24.500M22 12V18Q22 23 18 24.500" fill="none" stroke="#9A9C9D" stroke-width="2"/><rect x="6" y="13.500" width="6" height="2.600" fill="#9A9C9D"/><rect x="14" y="13.500" width="6" height="2.600" fill="#9A9C9D"/><path d="M8.500 22Q13 16.500 17.500 22" fill="none" stroke="#9A9C9D" stroke-width="2.400"/><path d="M4 27H11L9.500 24H6ZM15 27H22L20 24H16.500Z" fill="#9A9C9D"/></svg></div>
<div style="left:2523px;top:1568px"><svg width="25" height="24" viewBox="0 0 25 24"><path d="M3 0H22Q25 0 25 3V15Q25 18 22 18H22V24L16 18H3Q0 18 0 15V3Q0 0 3 0Z" fill="#616365"/></svg></div>
<span class="t" style="left:56.00px;top:16px;font-size:22.5px;letter-spacing:0.716px;color:#C4C4C4;font-weight:bold">untitled</span>
<span class="t" style="left:206.00px;top:16px;font-size:22.5px;letter-spacing:1.053px;color:#C0C0C0">my.py</span>
<span class="t" style="left:58.30px;top:66px;font-size:22.5px;letter-spacing:0.537px;color:#8C8E90">Project</span>
<span class="t" style="left:80.60px;top:106px;font-size:24.75px;letter-spacing:1.023px;color:#C4C4C4;font-weight:bold">untitled</span>
<span class="t" style="left:186.50px;top:106px;font-size:24.75px;letter-spacing:0.748px;color:#7D8082">(~/PycharmProjects/untitled)</span>
<span class="t" style="left:119.60px;top:144px;font-size:24.75px;letter-spacing:1.318px;color:#C0C0C0">;.html</span>
<span class="t" style="left:121.00px;top:182px;font-size:24.75px;letter-spacing:1.076px;color:#C0C0C0">my.py</span>
<span class="t" style="left:79.60px;top:220px;font-size:24.75px;letter-spacing:0.535px;color:#C0C0C0">External Libraries</span>
<span class="t" style="left:670.90px;top:66px;font-size:22.5px;letter-spacing:0.853px;color:#C6C6C6">my.py</span>
<span class="t" style="left:834.90px;top:66px;font-size:22.5px;letter-spacing:0.568px;color:#C8C8C4">codecs.py</span>
<span class="t" style="left:2316.60px;top:18px;font-size:22.5px;letter-spacing:-0.043px;color:#C0C0C0">my</span>
<span class="t" style="left:10.60px;top:992px;font-size:22.5px;letter-spacing:0.428px;color:#87898B">Debug</span>
<span class="t" style="left:126.70px;top:992px;font-size:22.5px;letter-spacing:-0.843px;color:#87898B">my</span>
<span class="t" style="left:72.60px;top:1040px;font-size:22.5px;letter-spacing:0.639px;color:#C0C0C0">Debugger</span>
<span class="t" style="left:235.50px;top:1040px;font-size:22.5px;letter-spacing:0.960px;color:#C0C0C0">Console</span>
<span class="t" style="left:106.00px;top:1098px;font-size:22.5px;letter-spacing:-0.001px;color:#C0C0C0">Frames</span>
<span class="t" style="left:604.50px;top:1098px;font-size:22.5px;letter-spacing:0.452px;color:#C0C0C0">Variables</span>
<span class="t" style="left:2110.30px;top:1098px;font-size:22.5px;letter-spacing:-0.124px;color:#C0C0C0">Watches</span>
<span class="t" style="left:111.60px;top:1156px;font-size:24.75px;letter-spacing:1.444px;color:#C0C0C0">MainThread</span>
<span class="t" style="left:113.50px;top:1202px;font-size:24.75px;letter-spacing:1.507px;color:#FFFFFF">&lt;module&gt;, my.py:1</span>
<span class="t" style="left:111.40px;top:1240px;font-size:24.75px;letter-spacing:0.649px;color:#787670">execfile, _pydev_execfile.py:18</span>
<span class="t" style="left:111.40px;top:1278px;font-size:24.75px;letter-spacing:1.321px;color:#787670">run, pydevd.py:1798</span>
<span class="t" style="left:113.50px;top:1316px;font-size:24.75px;letter-spacing:1.520px;color:#787670">&lt;module&gt;, pydevd.py:2407</span>
<span class="t" style="left:638.00px;top:1148px;font-size:24.75px;letter-spacing:0.648px;color:#F2575D">Unable to display frame variables</span>
<span class="t" style="left:2237.50px;top:1256px;font-size:26.5px;letter-spacing:0.655px;color:#6F7173">No watches</span>
<span class="t" style="left:626.20px;top:112px;font-size:26px;letter-spacing:0.000px;color:#F8F8F2;transform:scaleX(0.88);transform-origin:1.00px 50%;font-family:'Liberation Mono',monospace">1</span>
<span class="t" style="left:626.20px;top:142px;font-size:26px;letter-spacing:0.000px;color:#F8F8F2;transform:scaleX(0.88);transform-origin:1.00px 50%;font-family:'Liberation Mono',monospace">2</span>
<span class="t" style="left:626.20px;top:172px;font-size:26px;letter-spacing:0.000px;color:#F8F8F2;transform:scaleX(0.88);transform-origin:1.00px 50%;font-family:'Liberation Mono',monospace">3</span>
<span class="t" style="left:2213.50px;top:1570px;font-size:22.5px;letter-spacing:-0.082px;color:#BABCBD">3:1</span>
<span class="t" style="left:2268.80px;top:1570px;font-size:22.5px;letter-spacing:-1.200px;color:#BABCBD">LF</span>
<span class="t" style="left:2326.30px;top:1570px;font-size:22.5px;letter-spacing:-0.494px;color:#BABCBD">UTF−8</span>
<span class="c" style="left:720.0px;top:111px;color:#000;font-style:italic">for</span>
<span class="c" style="left:776.0px;top:111px;color:#000">i</span>
<span class="c" style="left:804.0px;top:111px;color:#000;font-style:italic">in</span>
<span class="c" style="left:846.0px;top:111px;color:#000">range(start=1,</span>
<span class="c" style="left:1056.0px;top:111px;color:#000">stop=9,</span>
<span class="c" style="left:1168.0px;top:111px;color:#000">step=1):</span>
<span class="c" style="left:776.0px;top:141px;color:#66D9EF">print</span>
<span class="c" style="left:846.0px;top:141px;color:#F8F8F2">(i)</span>
<div style="left:768.0px;top:132px;width:2px;height:2px;background:#4A4A5A;"></div>
<div style="left:796.0px;top:132px;width:2px;height:2px;background:#4A4A5A;"></div>
<div style="left:838.0px;top:132px;width:2px;height:2px;background:#4A4A5A;"></div>
<div style="left:1048.0px;top:132px;width:2px;height:2px;background:#4A4A5A;"></div>
<div style="left:1160.0px;top:132px;width:2px;height:2px;background:#4A4A5A;"></div>
<div style="left:726.0px;top:162px;width:2px;height:2px;background:#4B4B42;"></div>
<div style="left:740.0px;top:162px;width:2px;height:2px;background:#4B4B42;"></div>
<div style="left:754.0px;top:162px;width:2px;height:2px;background:#4B4B42;"></div>
<div style="left:768.0px;top:162px;width:2px;height:2px;background:#4B4B42;"></div>
</div></body></html>
